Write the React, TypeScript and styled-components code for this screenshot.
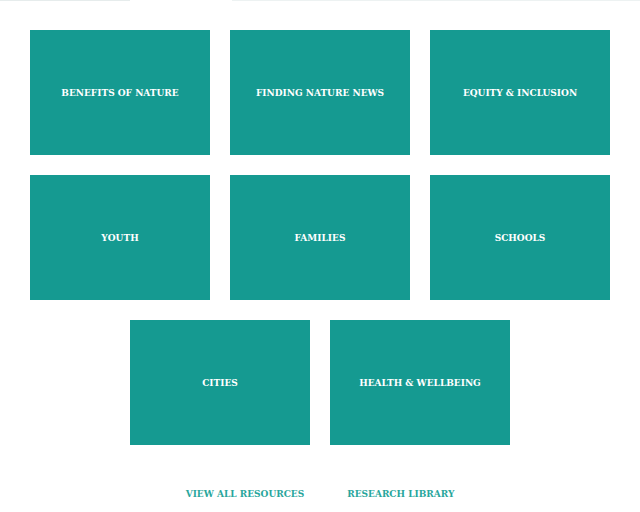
import React from "react";
import styled, { createGlobalStyle } from "styled-components";

const Global = createGlobalStyle`
  html, body { margin: 0; padding: 0; background: #fff; }
  body { font-family: "DejaVu Serif", "Liberation Serif", serif; font-stretch: condensed; }
`;

const Page = styled.div`
  width: 640px;
  height: 512px;
  display: flex;
  flex-direction: column;
  overflow: hidden;
`;

const TopLine = styled.div`
  display: flex;
  height: 1px;
`;

const Seg = styled.div<{ $w: number; $c: string }>`
  width: ${(p) => p.$w}px;
  flex: ${(p) => (p.$w === 0 ? 1 : "none")};
  background: ${(p) => p.$c};
`;

const Grid = styled.div`
  display: flex;
  flex-wrap: wrap;
  justify-content: center;
  gap: 20px;
  padding: 29px 30px 0;
`;

const Tile = styled.a`
  width: 180px;
  height: 125px;
  background: #159a91;
  display: flex;
  align-items: center;
  justify-content: center;
  color: #fff;
  font-size: 10px;
  font-weight: bold;
  font-stretch: condensed;
  text-decoration: none;
  text-transform: uppercase;
`;

const Links = styled.div`
  display: flex;
  justify-content: center;
  gap: 43px;
  margin-top: 43px;
`;

const LinkItem = styled.a`
  color: #29a69c;
  font-size: 10px;
  font-weight: bold;
  font-stretch: condensed;
  text-decoration: none;
`;

const tiles = [
  "Benefits of Nature",
  "Finding Nature News",
  "Equity & Inclusion",
  "Youth",
  "Families",
  "Schools",
  "Cities",
  "Health & Wellbeing",
];

export default function App() {
  return (
    <Page>
      <Global />
      <TopLine>
        <Seg $w={130} $c="#e6ecec" />
        <Seg $w={102} $c="#ffffff" />
        <Seg $w={0} $c="#edf2f2" />
      </TopLine>
      <Grid>
        {tiles.map((t) => (
          <Tile key={t} href="#">
            {t}
          </Tile>
        ))}
      </Grid>
      <Links>
        <LinkItem href="#">VIEW ALL RESOURCES</LinkItem>
        <LinkItem href="#">RESEARCH LIBRARY</LinkItem>
      </Links>
    </Page>
  );
}
